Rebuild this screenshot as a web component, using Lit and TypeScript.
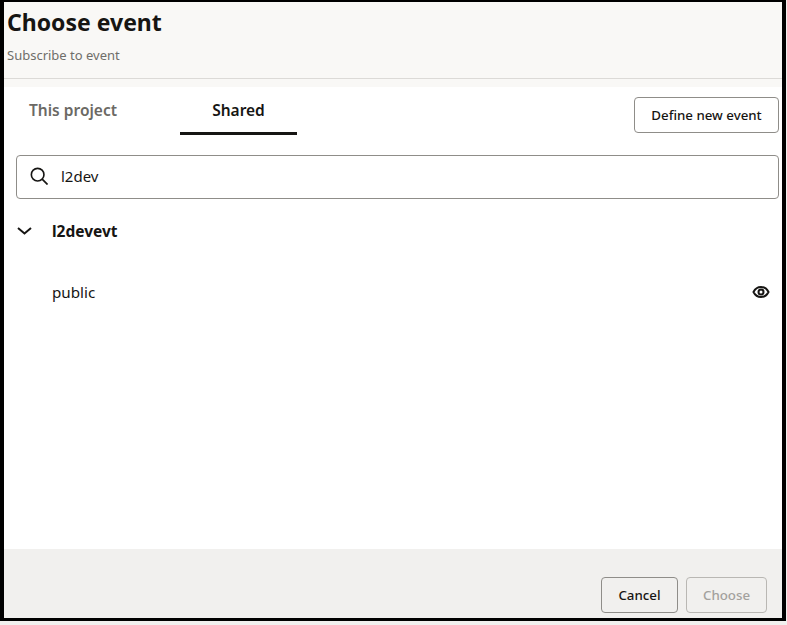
import { LitElement, html, css } from 'lit';
import { customElement } from 'lit/decorators.js';

@customElement('app-root')
export class AppRoot extends LitElement {
  static styles = css`
    :host {
      display: block;
      width: 787px;
      height: 625px;
      background: #f1f0ee;
      font-family: "Noto Sans", "Open Sans", sans-serif;
      color: #161513;
    }

    .dialog {
      box-sizing: border-box;
      width: 786px;
      height: 621px;
      display: flex;
      flex-direction: column;
      background: #fff;
      border-style: solid;
      border-color: #000;
      border-width: 2px 4px 3px 4px;
    }

    .header {
      box-sizing: border-box;
      height: 85px;
      padding-top: 5px;
      background: #f9f8f6;
    }

    .header-text {
      box-sizing: border-box;
      height: 72px;
      padding-left: 3px;
      border-bottom: 1px solid #dcdad7;
    }

    h1 {
      margin: 0;
      font-size: 23px;
      line-height: 30px;
      font-weight: 700;
    }

    .subtitle {
      margin-top: 9px;
      font-size: 13px;
      line-height: 18px;
      color: #6f6e6a;
    }

    .body {
      flex: 1;
      padding: 9px 3px 0 12px;
    }

    .tabs-row {
      display: flex;
      justify-content: space-between;
      align-items: flex-start;
    }

    .tabs {
      display: flex;
      gap: 13px;
      margin-left: -12px;
    }

    .tab {
      box-sizing: border-box;
      width: 117px;
      height: 39px;
      padding-top: 4px;
      text-align: center;
      font-size: 15.5px;
      line-height: 20px;
      font-weight: 600;
      color: #6b6964;
    }

    .tab.first {
      width: 163px;
      padding-right: 25px;
    }

    .tab.active {
      color: #161513;
      border-bottom: 3px solid #161513;
    }

    button {
      box-sizing: border-box;
      height: 36px;
      background: transparent;
      border: 1px solid #8f8d89;
      border-radius: 4px;
      font: 500 13.3px/18px "Noto Sans", "Open Sans", sans-serif;
      color: #161513;
      padding: 0;
    }

    .define {
      width: 145px;
      margin-top: 1px;
    }

    .search {
      box-sizing: border-box;
      height: 44px;
      margin-top: 20px;
      display: flex;
      align-items: center;
      gap: 13px;
      padding-left: 13px;
      border: 1px solid #8f8d89;
      border-radius: 4px;
      font-size: 15px;
    }

    .search span {
      margin-top: -2px;
    }

    .search svg {
      display: block;
      width: 18px;
      height: 18px;
      margin-top: -2px;
    }

    .group {
      display: flex;
      align-items: center;
      height: 22px;
      margin-top: 21px;
      font-size: 15.5px;
      font-weight: 700;
    }

    .group svg {
      display: block;
      width: 15px;
      height: 8px;
      margin-left: 1px;
      margin-right: 20px;
    }

    .item {
      display: flex;
      align-items: center;
      justify-content: space-between;
      height: 24px;
      margin-top: 38px;
      padding-left: 36px;
      font-size: 15.2px;
    }

    .item svg {
      display: block;
      width: 18px;
      height: 18px;
      margin-right: 9px;
    }

    .footer {
      box-sizing: border-box;
      height: 69px;
      padding: 28px 15px 0 0;
      display: flex;
      justify-content: flex-end;
      gap: 8px;
      background: #f1f0ee;
    }

    .cancel {
      width: 77px;
    }

    .choose {
      width: 81px;
      color: #a3a19d;
      border-color: #b9b7b3;
    }
  `;

  render() {
    return html`
      <div class="dialog">
        <div class="header">
          <div class="header-text">
            <h1>Choose event</h1>
            <div class="subtitle">Subscribe to event</div>
          </div>
        </div>
        <div class="body">
          <div class="tabs-row">
            <div class="tabs">
              <div class="tab first">This project</div>
              <div class="tab active">Shared</div>
            </div>
            <button class="define">Define new event</button>
          </div>
          <div class="search">
            <svg viewBox="0 0 20 20" fill="none" stroke="#161513" stroke-width="1.8">
              <circle cx="8.5" cy="8.5" r="7"></circle>
              <path d="M13.5 13.5L19.500 19.500"></path>
            </svg>
            <span>l2dev</span>
          </div>
          <div class="group">
            <svg viewBox="0 0 15 8" fill="none" stroke="#161513" stroke-width="2">
              <path d="M1 1l6.500 5.500L14 1"></path>
            </svg>
            <span>l2devevt</span>
          </div>
          <div class="item">
            <span>public</span>
            <svg viewBox="0 0 18 18" fill="none" stroke="#161513" stroke-width="2">
              <path d="M1.5 9C3.2 5.6 5.8 4 9 4s5.800 1.600 7.500 5c-1.700 3.400-4.300 5-7.500 5s-5.800-1.600-7.500-5z"></path>
              <circle cx="9" cy="9" r="2.500"></circle>
            </svg>
          </div>
        </div>
        <div class="footer">
          <button class="cancel">Cancel</button>
          <button class="choose">Choose</button>
        </div>
      </div>
    `;
  }
}
